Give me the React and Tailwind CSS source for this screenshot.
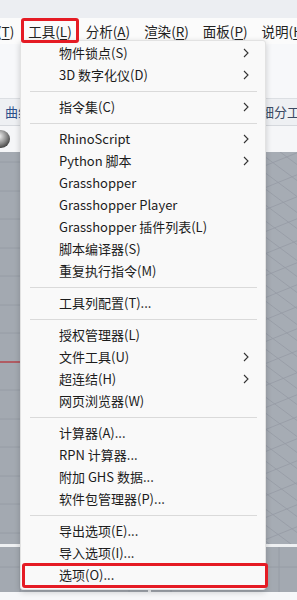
import React from "react";

const Chevron = () => (
  <svg width="6" height="10" viewBox="0 0 6 10" className="shrink-0">
    <path d="M1 1 L5 5 L1 9" fill="none" stroke="#333" strokeWidth="1.1" />
  </svg>
);

const items = [
  { t: "物件锁点(S)", sub: true },
  { t: "3D 数字化仪(D)", sub: true },
  "sep",
  { t: "指令集(C)", sub: true },
  "sep",
  { t: "RhinoScript", sub: true },
  { t: "Python 脚本", sub: true },
  { t: "Grasshopper" },
  { t: "Grasshopper Player" },
  { t: "Grasshopper 插件列表(L)" },
  { t: "脚本编译器(S)" },
  { t: "重复执行指令(M)" },
  "sep",
  { t: "工具列配置(T)..." },
  "sep",
  { t: "授权管理器(L)" },
  { t: "文件工具(U)", sub: true },
  { t: "超连结(H)", sub: true },
  { t: "网页浏览器(W)" },
  "sep",
  { t: "计算器(A)..." },
  { t: "RPN 计算器..." },
  { t: "附加 GHS 数据..." },
  { t: "软件包管理器(P)..." },
  "sep",
  { t: "导出选项(E)..." },
  { t: "导入选项(I)..." },
  { t: "选项(O)..." },
];

const MenuBarItem = ({ name, k }) => (
  <span className="whitespace-nowrap">
    {name}(<span className="underline underline-offset-2">{k}</span>)
  </span>
);

const TopViewGrid = () => (
  <svg width="149" height="392" className="block">
    <rect width="149" height="392" fill="#a3a9b1" />
    {[10, 39, 67, 96, 124, 153, 181].map((y) => (
      <line key={y} x1="0" x2="149" y1={y} y2={y} stroke="#969ca5" strokeWidth="1" />
    ))}
    {[238, 267, 295, 324, 352, 381].map((y) => (
      <line key={y} x1="0" x2="149" y1={y} y2={y} stroke="#969ca5" strokeWidth="1" />
    ))}
    <line x1="0" x2="149" y1="210" y2="210" stroke="#b5434a" strokeWidth="1.5" />
  </svg>
);

const PerspGrid = () => {
  const lines = [];
  for (let i = -20; i < 40; i++) {
    lines.push(
      <line key={"a" + i} x1={0} y1={i * 16} x2={148} y2={i * 16 + 110} stroke="#959ba4" strokeWidth="0.8" />
    );
    lines.push(
      <line key={"b" + i} x1={148} y1={i * 22} x2={0} y2={i * 22 + 60} stroke="#959ba4" strokeWidth="0.8" />
    );
  }
  return (
    <svg width="148" height="392" className="block">
      <rect width="148" height="392" fill="#a6acb4" />
      {lines}
    </svg>
  );
};

const LowerGrid = ({ w }) => (
  <svg width={w} height="45" className="block">
    <rect width={w} height="45" fill="#a3a9b1" />
    <line x1="0" x2={w} y1="20" y2="20" stroke="#969ca5" />
    <line x1="20" x2="20" y1="0" y2="45" stroke="#969ca5" />
    <line x1={w - 20} x2={w - 20} y1="0" y2="45" stroke="#969ca5" />
  </svg>
);

export default function App() {
  return (
    <div className="relative w-[297px] h-[600px] overflow-hidden bg-[#f6f7f9] font-['Noto_Sans_CJK_SC',sans-serif] text-[13px] text-[#1c1c1c]">
      {/* top strip */}
      <div className="h-[18px] bg-[#eceef2]" />
      {/* menu bar */}
      <div className="h-[26px] bg-[#fbfbfb] flex items-center gap-[14px] ml-[-30px] text-[13.5px] text-[#222]">
        <MenuBarItem name="变动" k="T" />
        <MenuBarItem name="工具" k="L" />
        <MenuBarItem name="分析" k="A" />
        <MenuBarItem name="渲染" k="R" />
        <MenuBarItem name="面板" k="P" />
        <MenuBarItem name="说明" k="H" />
      </div>
      {/* toolbar area */}
      <div className="h-[55px] bg-[#f7f8fa] border-b border-[#dcdfe3]" />
      <div className="h-[27px] bg-[#eef0f3] border-b border-[#d5d8dd] flex items-center justify-between text-[13px] text-[#2d4f8a]">
        <span className="ml-[5px] whitespace-nowrap">曲线工具</span>
        <span className="mr-[-16px] whitespace-nowrap text-[#3b4a63]">细分工具</span>
      </div>
      <div className="h-[26px] bg-[#f5f6f8] flex items-center">
        <svg width="22" height="22" className="ml-[-10px]">
          <defs>
            <radialGradient id="sp" cx="0.4" cy="0.35" r="0.7">
              <stop offset="0" stopColor="#f2f2f2" />
              <stop offset="0.6" stopColor="#8a8a8a" />
              <stop offset="1" stopColor="#3a3a3a" />
            </radialGradient>
          </defs>
          <circle cx="11" cy="11" r="9" fill="url(#sp)" />
        </svg>
      </div>
      {/* viewports */}
      <div className="flex gap-[3px] bg-[#eef0f2]">
        <TopViewGrid />
        <PerspGrid />
      </div>
      <div className="h-[3px] bg-[#eef0f2]" />
      <div className="flex gap-[3px] bg-[#eef0f2]">
        <LowerGrid w={149} />
        <LowerGrid w={148} />
      </div>

      {/* dropdown menu */}
      <div className="absolute left-[20px] top-[40px] w-[246px] bg-[#f9f9f9] border border-[#e2e2e2] rounded-[3px] shadow-[0_2px_6px_rgba(0,0,0,0.18)] pt-[1px] pb-[3px]">
        {items.map((it, i) =>
          it === "sep" ? (
            <div key={i} className="h-[10px] flex items-center pl-[9px] pr-[8px]">
              <div className="h-px w-full bg-[#dadada]" />
            </div>
          ) : (
            <div key={i} className="h-[22px] flex items-center justify-between pl-[38px] pr-[16px] whitespace-nowrap">
              <span>{it.t}</span>
              {it.sub ? <Chevron /> : null}
            </div>
          )
        )}
      </div>

      {/* red highlight boxes */}
      <div className="absolute left-[21px] top-[18px] w-[58px] h-[25px] border-[3px] border-[#e51b24] rounded-[3px]" />
      <div className="absolute left-[22px] top-[563px] w-[246px] h-[25px] border-[3px] border-[#e51b24] rounded-[3px]" />
    </div>
  );
}
